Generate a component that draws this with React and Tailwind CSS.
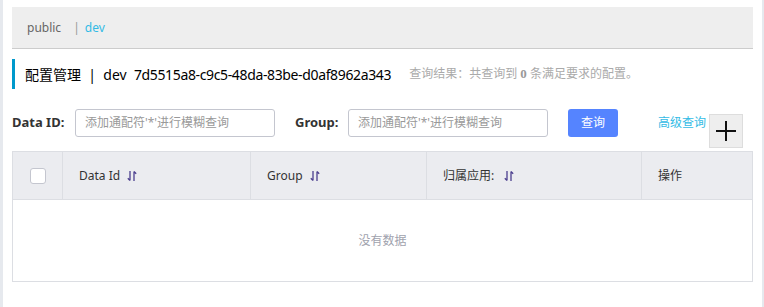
import React from 'react';

const FONT = { fontFamily: '"Noto Sans", "Noto Sans CJK SC", sans-serif' };

function SortIcon({ gap = 'ml-[7px]' }) {
  return (
    <svg width="10" height="12" viewBox="0 0 10 12" className={`${gap} inline-block`}>
      <path d="M3 1 V10.5 M0.8 8.3 L3 10.5" stroke="#4c3f8f" strokeWidth="1.3" fill="none" />
      <path d="M7 11 V1.5 M7 1.5 L9.2 3.7" stroke="#4c3f8f" strokeWidth="1.3" fill="none" />
    </svg>
  );
}

const columns = [
  { title: 'Data Id', w: 'w-[188px]', sort: true, gap: 'ml-[7px]' },
  { title: 'Group', w: 'w-[176px]', sort: true, gap: 'ml-[7px]' },
  { title: '归属应用:', w: 'w-[215px]', sort: true, gap: 'ml-[10px]' },
  { title: '操作', w: 'flex-1', sort: false },
];

export default function App() {
  return (
    <div className="w-[764px] h-[307px] bg-white flex text-[12px]" style={FONT}>
      <div className="w-[3px] bg-[#e6e9ee]" />
      <div className="flex-1 pl-[9px] pr-[9px] pt-[7px]">
        {/* namespace bar */}
        <div className="h-[42px] bg-[#eeeeee] border-b border-[#cccccc] flex items-center pl-[15px] text-[12px]">
          <span className="text-[#666]">public</span>
          <span className="ml-[12px] text-[#999]">|</span>
          <span className="ml-[5px] text-[#33bbe5]">dev</span>
        </div>

        {/* title */}
        <div className="mt-[10px] h-[30px] flex items-center border-l-[3px] border-[#0099cc] pl-[10px]">
          <span className="text-[14px] text-black whitespace-nowrap">
            配置管理 &nbsp;|&nbsp; dev &nbsp;<span className="tracking-[-0.36px]">7d5515a8-c9c5-48da-83be-d0af8962a343</span>
          </span>
          <span className="ml-[18px] text-[12px] text-[#aaa] whitespace-nowrap">
            查询结果：共查询到 <b className="text-[#999] text-[13px]" style={{ fontFamily: '"Liberation Serif", serif' }}>0</b> 条满足要求的配置。
          </span>
        </div>

        {/* search */}
        <div className="mt-[20px] flex items-start">
          <div className="flex items-center h-[28px]">
            <span className="font-bold text-[#333] text-[13px] w-[63px]">Data ID:</span>
            <div className="w-[200px] h-[28px] border border-[#c4c6cf] rounded-[3px] flex items-center pl-[9px] text-[#999]">
              添加通配符'*'进行模糊查询
            </div>
          </div>
          <div className="flex items-center h-[28px] ml-[20px]">
            <span className="font-bold text-[#333] text-[13px] w-[53px]">Group:</span>
            <div className="w-[200px] h-[28px] border border-[#c4c6cf] rounded-[3px] flex items-center pl-[9px] text-[#999]">
              添加通配符'*'进行模糊查询
            </div>
          </div>
          <button className="ml-[20px] w-[50px] h-[28px] rounded-[3px] bg-[#5584ff] text-white text-[12px]">查询</button>
          <span className="ml-[40px] h-[28px] flex items-center text-[#33bbe5]">高级查询</span>
          <div className="ml-[3px] mt-[5px] w-[34px] h-[34px] bg-[#eeeeee] border border-[#dddddd] flex items-center justify-center">
            <svg width="22" height="22" viewBox="0 0 22 22">
              <path d="M11 1 V21 M1 11 H21" stroke="#111" strokeWidth="2" />
            </svg>
          </div>
        </div>

        {/* table */}
        <div className="mt-[3px] border border-[#dcdee3]">
          <div className="h-[48px] bg-[#ebecf0] flex border-b border-[#dcdee3] text-[#333]">
            <div className="w-[50px] flex items-center justify-center border-r border-[#dcdee3]">
              <div className="w-[16px] h-[16px] bg-white border border-[#c4c6cf] rounded-[3px]" />
            </div>
            {columns.map((c, i) => (
              <div
                key={c.title}
                className={`${c.w} flex items-center pl-[16px] ${i < columns.length - 1 ? 'border-r border-[#dcdee3]' : ''}`}
              >
                {c.title}
                {c.sort && <SortIcon gap={c.gap} />}
              </div>
            ))}
          </div>
          <div className="h-[81px] flex items-center justify-center text-[#a0a2ad]">没有数据</div>
        </div>
      </div>
      <div className="w-[2px] bg-[#e6e9ee]" />
    </div>
  );
}
